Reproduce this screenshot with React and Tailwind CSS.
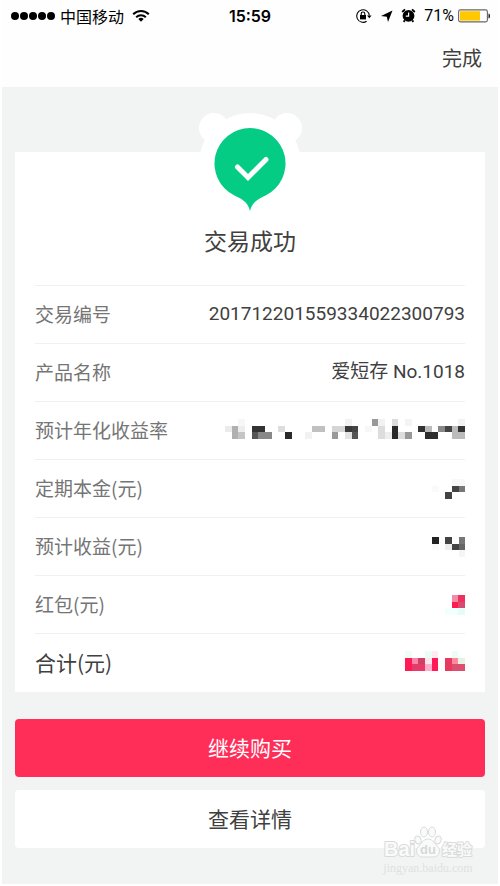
import React from 'react';

// Hidden amounts are drawn as small mosaics: [column, row, color]
const MOSAICS = {
  rate: {
    cols: 36,
    raised: true,
    cells: [
      [2, 0, '#f7f7f7'], [18, 0, '#f2f2f2'], [22, 0, '#999999'], [23, 0, '#f2f2f2'], [25, 0, '#dcdcdc'],
      [27, 0, '#f4f4f4'], [35, 0, '#f2f2f2'],
      [0, 1, '#ebebeb'], [1, 1, '#b0b0b0'], [2, 1, '#ededed'], [4, 1, '#333333'], [5, 1, '#333333'], [8, 1, '#dddddd'],
      [13, 1, '#c0c0c0'], [14, 1, '#c0c0c0'], [16, 1, '#d5d5d5'], [17, 1, '#d5d5d5'], [18, 1, '#3a3a3a'],
      [19, 1, '#444444'], [21, 1, '#f7f7f7'], [23, 1, '#dddddd'], [25, 1, '#2a2a2a'], [29, 1, '#333333'],
      [30, 1, '#bbbbbb'], [32, 1, '#888888'], [33, 1, '#444444'], [34, 1, '#bbbbbb'], [35, 1, '#333333'],
      [1, 2, '#b0b0b0'], [2, 2, '#c5c5c5'], [4, 2, '#555555'], [5, 2, '#888888'], [6, 2, '#888888'],
      [9, 2, '#2a2a2a'], [12, 2, '#f2f2f2'], [16, 2, '#999999'], [18, 2, '#e2e2e2'], [19, 2, '#555555'],
      [23, 2, '#dddddd'], [24, 2, '#eeeeee'], [25, 2, '#2a2a2a'], [26, 2, '#dddddd'], [27, 2, '#999999'],
      [30, 2, '#2e2e2e'], [31, 2, '#2e2e2e'], [34, 2, '#bbbbbb'], [35, 2, '#bbbbbb'],
    ],
  },
  principal: {
    cols: 5,
    cells: [
      [3, 0, '#f8f8f8'], [4, 0, '#f8f8f8'], [0, 1, '#fafafa'], [3, 1, '#444444'], [4, 1, '#777777'],
      [2, 2, '#444444'],
    ],
  },
  income: {
    cols: 5,
    cells: [
      [0, 0, '#222222'], [2, 0, '#444444'], [4, 0, '#777777'],
      [0, 1, '#fafafa'], [2, 1, '#eeeeee'], [3, 1, '#444444'], [4, 1, '#666666'], [4, 2, '#f5f5f5'],
    ],
  },
  bonus: {
    cols: 3,
    cells: [
      [1, 0, '#f28aa8'], [2, 0, '#f0305c'], [1, 1, '#ff1a50'], [2, 1, '#d84a72'],
      [0, 2, '#f3fffc'], [1, 2, '#f3fffc'], [2, 2, '#e6fdf7'],
    ],
  },
  total: {
    cols: 9,
    raised: true,
    cells: [
      [0, 0, '#f0fdf6'], [3, 0, '#ecfdf6'], [4, 0, '#fdeaf2'], [7, 0, '#ecfdf6'],
      [0, 1, '#ff1a55'], [1, 1, '#fa85a8'], [2, 1, '#d04066'], [3, 1, '#ffe6ee'], [4, 1, '#ff1a55'],
      [6, 1, '#e83a5e'], [7, 1, '#ff8a9c'], [8, 1, '#e6f3e4'],
      [0, 2, '#ff1a55'], [1, 2, '#e83a68'], [2, 2, '#e83a68'], [3, 2, '#ffaecb'], [4, 2, '#ff1a55'],
      [6, 2, '#e83a5e'], [7, 2, '#dd4f70'], [8, 2, '#dd4f70'],
    ],
  },
};

const rows = [
  { label: '交易编号', value: '201712201559334022300793' },
  { label: '产品名称', value: '爱短存 No.1018' },
  { label: '预计年化收益率', mosaic: 'rate' },
  { label: '定期本金(元)', mosaic: 'principal' },
  { label: '预计收益(元)', mosaic: 'income' },
  { label: '红包(元)', mosaic: 'bonus' },
  { label: '合计(元)', mosaic: 'total', strong: true },
];

const Mosaic = ({ name }) => {
  const { cols, raised, cells } = MOSAICS[name];
  return (
    <svg
      className={raised ? 'mb-1 h-5 w-auto' : 'h-5 w-auto'}
      viewBox={`0 0 ${cols} 3`}
      shapeRendering="crispEdges"
      role="img"
      aria-label="已隐藏"
    >
      {cells.map(([x, y, fill]) => (
        <rect key={`${x}-${y}`} x={x} y={y} width="1" height="1" fill={fill} />
      ))}
    </svg>
  );
};

const StatusBar = () => (
  <div className="grid h-[31px] grid-cols-[1fr_auto_1fr] items-center px-2 text-[16px] leading-none text-black">
    <div className="flex items-center gap-1">
      <svg width="46" height="10" viewBox="0 0 46 10">
        {[5, 14, 23, 32, 41].map((cx) => (
          <circle key={cx} cx={cx} cy="5" r="4" />
        ))}
      </svg>
      <span className="font-['Noto_Sans_CJK_SC',sans-serif]">中国移动</span>
      <svg className="ml-1" width="18" height="14" viewBox="0 0 18 14" fill="none" stroke="#000" strokeWidth="2">
        <path d="M1.2 5.2a11 11 0 0 1 15.6 0" />
        <path d="M4.2 8.2a6.8 6.8 0 0 1 9.6 0" />
        <path d="M9 12.8 6.3 10.1a3.8 3.8 0 0 1 5.4 0z" fill="#000" stroke="none" />
      </svg>
    </div>
    <span className="font-semibold">15:59</span>
    <div className="flex items-center justify-end gap-1">
      {/* Rotation lock */}
      <svg width="17" height="16" viewBox="0 0 17 16" fill="none" stroke="#000" strokeWidth="1.1">
        <path d="M11.6 13.2A6.3 6.3 0 1 1 14.3 7.5" />
        <path d="M12 7.4h4.6l-2.3 2.8z" fill="#000" stroke="none" />
        <rect x="5" y="7" width="6" height="4.4" fill="#000" stroke="none" />
        <path d="M6.2 7V5.8a1.8 1.8 0 0 1 3.6 0V7" />
      </svg>
      {/* Location arrow */}
      <svg className="ml-1" width="13" height="14" viewBox="0 0 13 14">
        <path d="M12.5 1.5 8 13 6.8 7.8 1 7z" />
      </svg>
      {/* Alarm clock */}
      <svg className="ml-1" width="15" height="15" viewBox="0 0 15 15">
        <circle cx="7.5" cy="7.8" r="5.9" />
        <path d="M1.2 4 4 1.4M13.8 4 11 1.4M3.8 12.4l-1.2 1.4M11.2 12.4l1.2 1.4" stroke="#000" strokeWidth="1.8" />
        <path d="M7.6 4.6v3.6H4.8" fill="none" stroke="#fff" strokeWidth="1.2" />
      </svg>
      <span className="ml-1 font-['Roboto',sans-serif]">71%</span>
      <svg width="32" height="14" viewBox="0 0 32 14">
        <rect x="0.6" y="0.9" width="28.8" height="12" rx="1.8" fill="#fff" stroke="#666" strokeWidth="1.1" />
        <rect x="2" y="2.2" width="20" height="9.4" fill="#ffc800" />
        <path d="M30.5 4.6a2.5 2.5 0 0 1 0 4.8z" fill="#222" />
      </svg>
    </div>
  </div>
);

const SuccessBadge = () => (
  <svg className="-mt-10" width="104" height="104" viewBox="0 0 104 104">
    <g fill="#fff">
      <circle cx="16" cy="16" r="15" />
      <circle cx="89" cy="16" r="15" />
      <circle cx="52" cy="52" r="51" />
    </g>
    <path
      d="M52 16a35.5 35.5 0 0 1 16 67.2C60 87 54 90 52 99c-2-9-8-12-16-15.8A35.5 35.5 0 0 1 52 16z"
      fill="#05cc85"
    />
    <path
      d="m39.5 55 10.5 10.500 18-18"
      fill="none"
      stroke="#fff"
      strokeWidth="5"
      strokeLinecap="round"
    />
  </svg>
);

const Watermark = () => (
  <div className="pointer-events-none absolute right-6 bottom-2 flex flex-col items-center text-[#dfe1e1]">
    <svg width="92" height="34" viewBox="0 0 92 34" fill="#fafafa" stroke="#d9dbdb" strokeWidth="1">
      <g strokeLinejoin="round" paintOrder="stroke" strokeWidth="2">
        <text x="2" y="30" fontSize="20" fontWeight="bold" fontFamily="Liberation Sans, sans-serif">Bai</text>
        <text x="60" y="29" fontSize="15" fontWeight="bold" fontFamily="Noto Sans CJK SC, sans-serif">经验</text>
      </g>
      <ellipse cx="36" cy="14" rx="3" ry="4" transform="rotate(-20 36 14)" />
      <ellipse cx="42" cy="6" rx="3.5" ry="5" />
      <ellipse cx="50" cy="6" rx="3.5" ry="5" />
      <ellipse cx="56" cy="14" rx="3" ry="4" transform="rotate(20 56 14)" />
      <path d="M46 13c5 0 7 5 10 8s1 10-4 10H40c-5 0-7-7-4-10s5-8 10-8z" />
      <text x="38" y="28" fontSize="13" fontWeight="bold" fontFamily="Liberation Sans, sans-serif" fill="#d6d8d8" stroke="none">du</text>
    </svg>
    <span className="font-['Liberation_Serif',serif] text-[12px] leading-4">jingyan.baidu.com</span>
  </div>
);

export default function App() {
  return (
    <div className="flex min-h-screen flex-col bg-white px-0.5 pb-0.5 font-['Roboto','Noto_Sans_CJK_SC',sans-serif] text-[#404040]">
      {/* Header */}
      <header className="bg-[#fefefe] font-['Inter','Noto_Sans_CJK_SC',sans-serif]">
        <StatusBar />
        <div className="flex h-14 items-center justify-end px-4">
          <button type="button" className="text-[20px] leading-6">完成</button>
        </div>
      </header>

      <main className="relative flex-1 bg-[#f2f4f4] px-[13px] pt-[65px] pb-9">
        {/* Result card */}
        <section className="bg-white px-5 pb-px">
          <div className="flex flex-col items-center">
            <SuccessBadge />
            <h1 className="mt-3 mb-7 text-[23px] leading-[29px]">交易成功</h1>
          </div>
          <dl>
            {rows.map((row) => (
              <div key={row.label} className="flex h-[58px] items-center justify-between border-t border-[#f0f0f0]">
                <dt
                  className={
                    row.strong
                      ? "font-['Noto_Sans_CJK_SC',sans-serif] text-[21px]"
                      : "font-['Noto_Sans_CJK_SC',sans-serif] text-[19px] text-[#757575]"
                  }
                >
                  {row.label}
                </dt>
                <dd className="text-[19px]">
                  {row.mosaic ? <Mosaic name={row.mosaic} /> : row.value}
                </dd>
              </div>
            ))}
          </dl>
        </section>

        {/* Actions */}
        <div className="mt-[27px] flex flex-col gap-[13px] font-['Noto_Sans_CJK_SC',sans-serif]">
          <button type="button" className="h-[58px] rounded bg-[#ff2e58] text-[21px] text-white">
            继续购买
          </button>
          <button type="button" className="h-[58px] rounded bg-white text-[21px]">
            查看详情
          </button>
        </div>

        <Watermark />
      </main>
    </div>
  );
}
